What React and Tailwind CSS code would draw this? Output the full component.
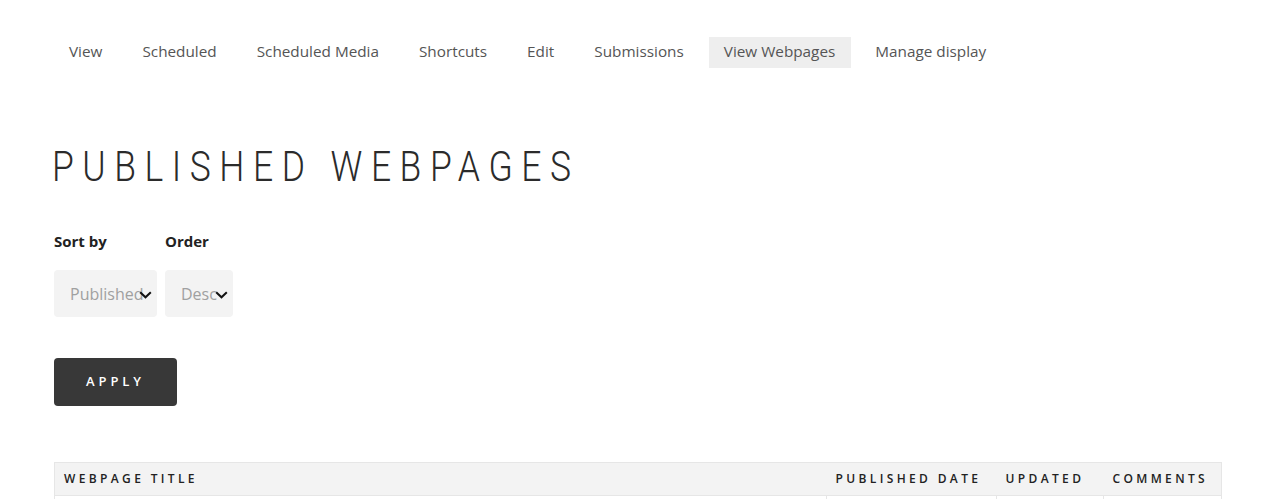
import React from 'react';

const tabs = ['View', 'Scheduled', 'Scheduled Media', 'Shortcuts', 'Edit', 'Submissions', 'View Webpages', 'Manage display'];

function Chevron() {
  return (
    <svg width="13" height="8" viewBox="0 0 13 8" className="absolute right-[5px] top-[21px]">
      <path d="M1.2 1.2 L6.5 6.3 L11.8 1.2" fill="none" stroke="#111" strokeWidth="2" />
    </svg>
  );
}

function Select({ value, width }) {
  return (
    <div className={`relative h-[47px] rounded-[4px] bg-[#f3f3f3] overflow-hidden ${width}`}>
      <div className="pl-4 pr-[12px] h-full flex items-center overflow-hidden whitespace-nowrap text-[16px] text-[#a0a0a0]">
        {value}
      </div>
      <Chevron />
    </div>
  );
}

export default function App() {
  return (
    <div className="min-h-screen bg-white px-[54px] text-[#333]" style={{ fontFamily: '"Open Sans", sans-serif' }}>
      {/* Tabs */}
      <nav className="pt-[37px] flex gap-[9px]">
        {tabs.map((t) => (
          <a
            key={t}
            className={`h-[31px] pl-[15px] pr-[16px] flex items-center text-[15.3px] text-[#555] pb-[2px] ${t === 'View Webpages' ? 'bg-[#eeeeee]' : ''}`}
          >
            {t}
          </a>
        ))}
      </nav>

      <h1
        className="mt-[73px] text-[42px] font-light leading-[52px] tracking-[0.24em] text-[#2b2b2b] -ml-[2px]"
        style={{ fontFamily: '"Roboto", sans-serif', transform: 'scaleX(0.845)', transformOrigin: 'left' }}
      >
        PUBLISHED WEBPAGES
      </h1>

      <form className="mt-[37px]">
        <div className="flex gap-2">
          <div className="flex flex-col">
            <label className="text-[15px] font-bold text-[#222] leading-[22px]">Sort by</label>
            <div className="mt-[18px]">
              <Select value="Published" width="w-[103px]" />
            </div>
          </div>
          <div className="flex flex-col">
            <label className="text-[15px] font-bold text-[#222] leading-[22px]">Order</label>
            <div className="mt-[18px]">
              <Select value="Desc" width="w-[68px]" />
            </div>
          </div>
        </div>

        <button
          type="button"
          className="mt-[41px] w-[123px] h-[48px] rounded-[4px] bg-[#383838] text-white text-[13px] font-semibold tracking-[0.3em]"
        >
          APPLY
        </button>
      </form>

      <table className="mt-[56px] w-[1168px] border border-[#e6e6e6] border-collapse">
        <thead>
          <tr className="bg-[#f3f3f3] h-[33px]">
            <th className="text-left pl-[9px] text-[12px] font-semibold tracking-[0.28em] text-[#222]">WEBPAGE TITLE</th>
            <th className="w-[170px] text-left pl-[9px] text-[12px] font-semibold tracking-[0.28em] text-[#222]">PUBLISHED DATE</th>
            <th className="w-[107px] text-left pl-[9px] text-[12px] font-semibold tracking-[0.28em] text-[#222]">UPDATED</th>
            <th className="w-[118px] text-left pl-[9px] text-[12px] font-semibold tracking-[0.28em] text-[#222]">COMMENTS</th>
          </tr>
        </thead>
        <tbody>
          <tr className="h-[40px]">
            <td className="border-t border-[#e6e6e6]"></td>
            <td className="border border-[#e6e6e6]"></td>
            <td className="border border-[#e6e6e6]"></td>
            <td className="border border-[#e6e6e6]"></td>
          </tr>
        </tbody>
      </table>
    </div>
  );
}
